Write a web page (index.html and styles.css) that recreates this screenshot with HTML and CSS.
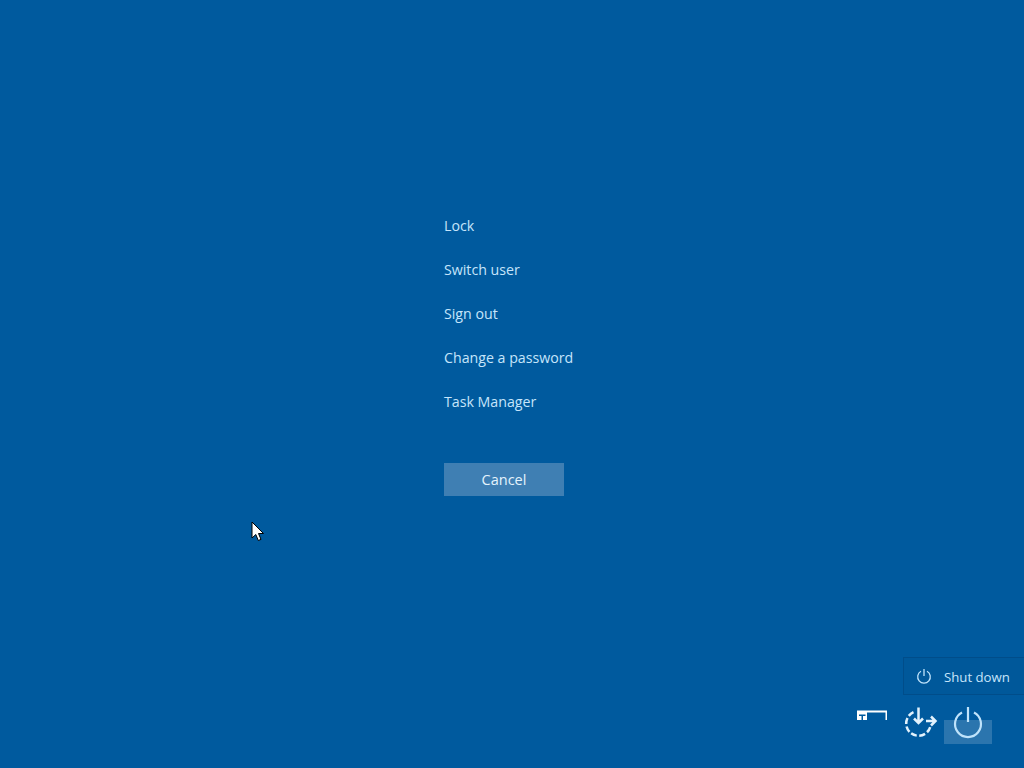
FILE: index.html
```html
<!DOCTYPE html>
<html lang="en">
<head>
<meta charset="utf-8">
<title>Security options</title>
<link rel="stylesheet" href="styles.css">
</head>
<body>
<main class="screen">
  <nav class="menu">
    <a class="menu-item">Lock</a>
    <a class="menu-item">Switch user</a>
    <a class="menu-item">Sign out</a>
    <a class="menu-item">Change a password</a>
    <a class="menu-item">Task Manager</a>
    <button class="cancel">Cancel</button>
  </nav>
  <footer class="tray">
    <div class="tray-btn">
      <svg class="icon" width="48" height="48" viewBox="0 0 48 48" fill="none">
        <path d="M9 14.500H39V24H37.500V16.500H19V24H9Z" fill="#fff"/>
        <path d="M11 18.500H17.500V20H11ZM13.500 20H15V24H13.500Z" fill="#005a9e"/>
      </svg>
    </div>
    <div class="tray-btn">
      <svg class="icon" width="48" height="48" viewBox="0 0 48 48" fill="none" stroke="#e2f2fd" stroke-width="2.500">
        <path d="M17.500 16.200A12.300 12.300 0 1 0 34.500 30" stroke-dasharray="6 2.500"/>
        <path d="M22.500 11.500V27M18 22.500L22.500 27L27 22.500"/>
        <path d="M30 25H39M35 20.500L39.500 25L35 29.500"/>
      </svg>
    </div>
    <div class="tray-btn power">
      <svg class="icon" width="48" height="48" viewBox="0 0 48 48" fill="none" stroke="#bfe3fb" stroke-width="2.200">
        <path d="M18 16.500A13 13 0 1 0 30 16.500"/>
        <path d="M24 11V26"/>
      </svg>
      <div class="tooltip">
        <svg width="16" height="16" viewBox="0 0 16 16" fill="none" stroke="#bfe3fb" stroke-width="1.300">
          <path d="M5 3.300A6.300 6.300 0 1 0 11 3.300"/>
          <path d="M8 1V8"/>
        </svg>
        <span class="tooltip-label">Shut down</span>
      </div>
    </div>
  </footer>
  <svg class="cursor" width="13" height="21" viewBox="0 0 13 21">
    <path d="M1 1V17L4.800 13.500L7.300 19.500L10 18.400L7.500 12.500H12.500Z" fill="#fff" stroke="#000" stroke-width="1"/>
  </svg>
</main>
</body>
</html>
```
FILE: styles.css
```css
* { box-sizing: border-box; }
html, body { margin: 0; height: 100%; }
body {
  background: #005a9e;
  font-family: "Open Sans", "Noto Sans", sans-serif;
  overflow: hidden;
}
.screen {
  position: relative;
  height: 768px;
  display: flex;
  flex-direction: column;
  justify-content: space-between;
  padding: 203px 32px 24px 444px;
}
.menu {
  display: flex;
  flex-direction: column;
  align-items: flex-start;
}
.menu-item {
  height: 44px;
  line-height: 46px;
  font-size: 14.200px;
  color: #c6e5fb;
}
.cancel {
  width: 120px;
  height: 33px;
  margin-top: 40px;
  border: 0;
  padding: 0;
  background: #3f7fb3;
  color: #e4f3fd;
  font: inherit;
  font-size: 14.500px;
}
.tray {
  display: flex;
  justify-content: flex-end;
  height: 48px;
}
.tray-btn {
  position: relative;
  width: 48px;
  height: 48px;
}
.icon { position: relative; display: block; }
.power::before {
  content: "";
  position: absolute;
  left: 0;
  bottom: 0;
  width: 48px;
  height: 24px;
  background: #2b75ae;
}
.tooltip {
  position: absolute;
  right: -32px;
  bottom: 49px;
  width: 121px;
  height: 38px;
  display: flex;
  align-items: center;
  gap: 12px;
  padding-left: 12px;
  background: #00589a;
  border: 1px solid #004d8a;
  border-right: 0;
  color: #c6e5fb;
  font-size: 13.200px;
}
.tooltip-label { margin-top: 2px; }
.cursor {
  position: absolute;
  left: 251px;
  top: 521px;
}
```
